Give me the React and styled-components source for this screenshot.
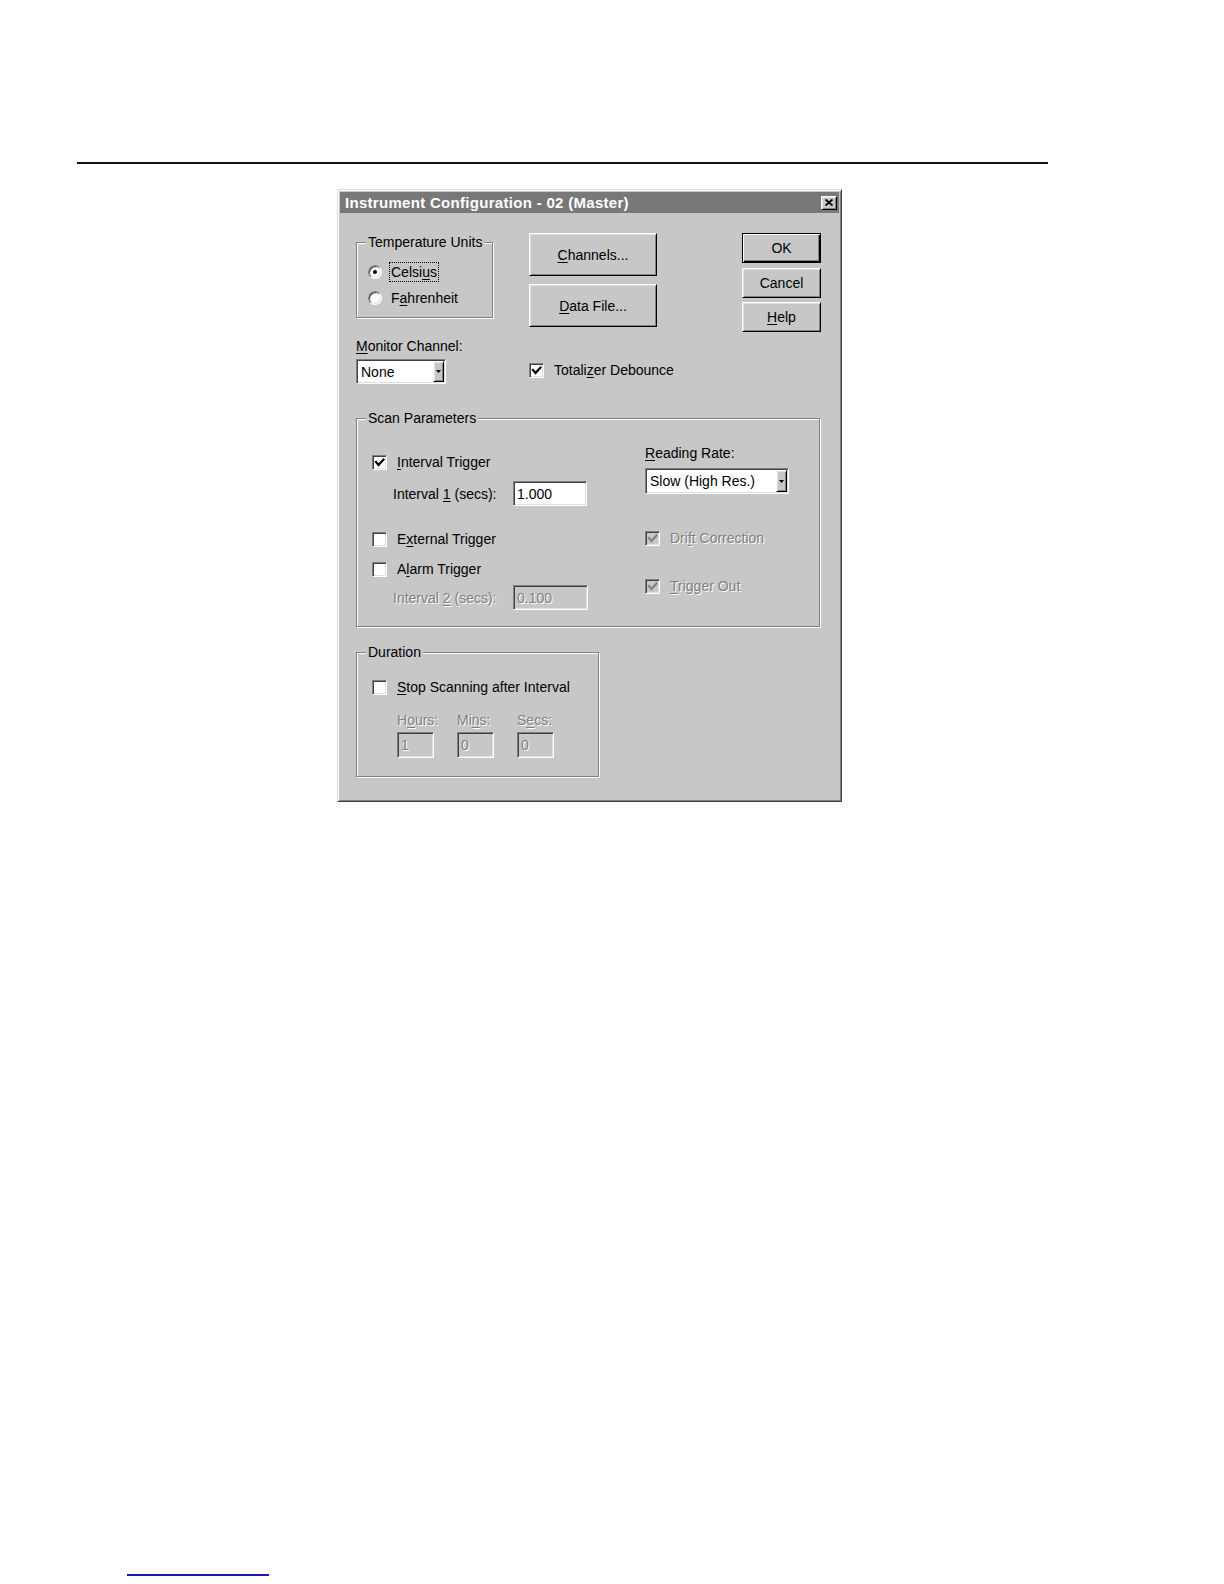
import React from 'react';
import styled, { createGlobalStyle, css } from 'styled-components';

const FACE = '#c7c7c7';

const GlobalStyle = createGlobalStyle`
  html, body { margin: 0; padding: 0; background: #fff; }
  body { font-family: "Liberation Sans", Arial, sans-serif; }
  * { box-sizing: border-box; }
`;

const raised = css`
  border: 1px solid;
  border-color: #fff #000 #000 #fff;
  box-shadow: inset 1px 1px #dfdfdf, inset -1px -1px #808080;
`;

const sunken = css`
  border: 1px solid;
  border-color: #808080 #fff #fff #808080;
  box-shadow: inset 1px 1px #404040, inset -1px -1px #dfdfdf;
`;

const disabledText = css`
  color: #808080;
  text-shadow: 1px 1px 0 #fff;
`;

const Page = styled.div`
  width: 1224px;
  height: 1584px;
  padding-top: 162px;
  display: flex;
  flex-direction: column;
  overflow: hidden;
`;

const TopRule = styled.div`
  margin-left: 77px;
  width: 971px;
  height: 2px;
  background: #111;
`;

const FootRule = styled.div`
  margin-top: auto;
  margin-bottom: 8px;
  margin-left: 127px;
  width: 142px;
  height: 2px;
  background: #1c1ca8;
`;

const Window = styled.div`
  margin-top: 25px;
  margin-left: 337px;
  width: 505px;
  background: ${FACE};
  border: 1px solid;
  border-color: #dfdfdf #404040 #404040 #dfdfdf;
  box-shadow: inset 1px 1px #fff, inset -1px -1px #808080;
  padding: 2px;
  font-size: 14px;
  color: #000;
`;

const TitleBar = styled.div`
  height: 21px;
  background: #787878;
  display: flex;
  align-items: center;
  justify-content: space-between;
  padding: 0 2px 0 5px;
`;

const TitleText = styled.span`
  color: #fff;
  font-weight: bold;
  font-size: 15px;
  letter-spacing: 0.3px;
  white-space: nowrap;
  line-height: 21px;
`;

const CloseButton = styled.div`
  width: 16px;
  height: 14px;
  background: ${FACE};
  ${raised};
  display: flex;
  align-items: center;
  justify-content: center;
`;

const Body = styled.div`
  padding: 20px 18px 22px 16px;
`;

const TopSection = styled.div`
  display: flex;
  align-items: flex-start;
`;

const LeftCol = styled.div`
  width: 137px;
  display: flex;
  flex-direction: column;
`;

const MidCol = styled.div`
  margin-left: 36px;
  width: 128px;
  display: flex;
  flex-direction: column;
`;

const RightCol = styled.div`
  margin-left: auto;
  width: 79px;
  display: flex;
  flex-direction: column;
  gap: 4.5px;
`;

const ButtonStack = styled.div`
  display: flex;
  flex-direction: column;
  gap: 8px;
`;

const PushButton = styled.div`
  width: ${p => p.$w}px;
  height: ${p => p.$h}px;
  background: ${FACE};
  font-size: 14px;
  display: flex;
  align-items: center;
  justify-content: center;
  white-space: nowrap;
  ${raised};
  ${p => p.$default && css`
    border: 1px solid #000;
    box-shadow: inset 1px 1px #fff, inset -1px -1px #000, inset -2px -2px #808080;
  `}
`;

const Key = styled.span`
  text-decoration: underline;
  text-underline-offset: 2px;
`;

const Group = styled.fieldset`
  margin: ${p => p.$mt || 0}px 0 0 0;
  padding: 0;
  min-width: 0;
  width: ${p => p.$w}px;
  border: 1px solid #808080;
  box-shadow: inset 1px 1px #fff, 1px 1px #fff;
`;

const Legend = styled.legend`
  margin-left: 9px;
  padding: 0 2px;
  line-height: 16px;
  font-size: 14px;
  background: ${FACE};
  white-space: nowrap;
`;

const RadioList = styled.div`
  display: flex;
  flex-direction: column;
  gap: 6px;
  padding: 12px 0 9px 11px;
`;

const RadioRow = styled.div`
  display: flex;
  align-items: center;
  height: 20px;
  gap: 7px;
`;

const RadioDot = styled.span`
  width: 14px;
  height: 14px;
  border-radius: 50%;
  flex: none;
  background: #fff;
  ${sunken};
  display: flex;
  align-items: center;
  justify-content: center;
  &::after {
    content: '';
    width: 4px;
    height: 4px;
    border-radius: 50%;
    background: #000;
    display: ${p => (p.$on ? 'block' : 'none')};
  }
`;

const FocusText = styled.span`
  border: 1px dotted ${p => (p.$focus ? '#000' : 'transparent')};
  padding: 1px 1px;
  line-height: 16px;
  white-space: nowrap;
`;

const Caption = styled.div`
  line-height: 16px;
  height: 16px;
  white-space: nowrap;
  margin-top: ${p => p.$mt || 0}px;
  padding-left: ${p => p.$pl || 0}px;
  width: ${p => (p.$w ? `${p.$w}px` : 'auto')};
  flex: none;
  ${p => p.$disabled && disabledText};
`;

const Combo = styled.div`
  width: ${p => p.$w}px;
  height: ${p => p.$h}px;
  margin-top: ${p => p.$mt || 0}px;
  background: #fff;
  ${sunken};
  padding: 1px;
  display: flex;
  align-items: stretch;
`;

const ComboText = styled.span`
  flex: 1;
  padding-left: 3px;
  display: flex;
  align-items: center;
  white-space: nowrap;
`;

const DropButton = styled.span`
  width: 11px;
  background: ${FACE};
  ${raised};
  display: flex;
  align-items: center;
  justify-content: center;
`;

const CheckRow = styled.div`
  display: flex;
  align-items: center;
  height: 16px;
  gap: 10px;
  margin-top: ${p => p.$mt || 0}px;
  white-space: nowrap;
`;

const CheckBox = styled.span`
  width: 15px;
  height: 15px;
  flex: none;
  background: ${p => (p.$disabled ? FACE : '#fff')};
  ${sunken};
  display: flex;
  align-items: center;
  justify-content: center;
`;

const CheckLabel = styled.span`
  line-height: 16px;
  ${p => p.$disabled && disabledText};
`;

const FieldRow = styled.div`
  display: flex;
  align-items: center;
  margin-top: ${p => p.$mt || 0}px;
`;

const TextField = styled.div`
  width: ${p => p.$w}px;
  height: ${p => p.$h}px;
  background: ${p => (p.$disabled ? FACE : '#fff')};
  ${sunken};
  padding-left: 3px;
  display: flex;
  align-items: center;
  white-space: nowrap;
  ${p => p.$disabled && disabledText};
`;

const ScanGrid = styled.div`
  display: grid;
  grid-template-columns: 273px 1fr;
  padding: 0 0 16px 15px;
`;

const Column = styled.div`
  display: flex;
  flex-direction: column;
`;

const DurationBody = styled.div`
  padding: 0 0 18px 15px;
  display: flex;
  flex-direction: column;
`;

const TimeGrid = styled.div`
  display: grid;
  grid-template-columns: repeat(3, 60px);
  margin: 17px 0 0 25px;
`;

const TimeCol = styled.div`
  display: flex;
  flex-direction: column;
  gap: 4px;
`;

const CheckMark = ({ color }) => (
  <svg width="11" height="11" viewBox="0 0 11 11">
    <polyline points="2,5 4.5,8 9.5,2.5" fill="none" stroke={color} strokeWidth="2.2" strokeLinecap="square" />
  </svg>
);

const Check = ({ checked, disabled, mt, children }) => (
  <CheckRow $mt={mt}>
    <CheckBox $disabled={disabled}>{checked && <CheckMark color={disabled ? '#808080' : '#000'} />}</CheckBox>
    <CheckLabel $disabled={disabled}>{children}</CheckLabel>
  </CheckRow>
);

const Arrow = () => (
  <svg width="5" height="3" viewBox="0 0 5 3">
    <polygon points="0,0 5,0 2.5,3" fill="#000" />
  </svg>
);

const Dropdown = ({ w, h, mt, value }) => (
  <Combo $w={w} $h={h} $mt={mt}>
    <ComboText>{value}</ComboText>
    <DropButton>
      <Arrow />
    </DropButton>
  </Combo>
);

export default function App() {
  return (
    <>
      <GlobalStyle />
      <Page>
        <TopRule />
        <Window>
          <TitleBar>
            <TitleText>Instrument Configuration - 02 (Master)</TitleText>
            <CloseButton>
              <svg width="8" height="7" viewBox="0 0 8 7">
                <path d="M0.5 0.5 L7.5 6.5 M7.5 0.5 L0.5 6.5" stroke="#000" strokeWidth="1.8" />
              </svg>
            </CloseButton>
          </TitleBar>
          <Body>
            <TopSection>
              <LeftCol>
                <Group $w={137} $mt={1}>
                  <Legend>Temperature Units</Legend>
                  <RadioList>
                    <RadioRow>
                      <RadioDot $on />
                      <FocusText $focus>
                        Celsi<Key>u</Key>s
                      </FocusText>
                    </RadioRow>
                    <RadioRow>
                      <RadioDot />
                      <FocusText>
                        F<Key>a</Key>hrenheit
                      </FocusText>
                    </RadioRow>
                  </RadioList>
                </Group>
                <Caption $mt={20}>
                  <Key>M</Key>onitor Channel:
                </Caption>
                <Dropdown w={90} h={25} mt={5} value="None" />
              </LeftCol>
              <MidCol>
                <ButtonStack>
                  <PushButton $w={128} $h={43}>
                    <Key>C</Key>hannels...
                  </PushButton>
                  <PushButton $w={128} $h={43}>
                    <Key>D</Key>ata File...
                  </PushButton>
                </ButtonStack>
                <Check checked mt={35}>
                  Totali<Key>z</Key>er Debounce
                </Check>
              </MidCol>
              <RightCol>
                <PushButton $w={79} $h={30} $default>
                  OK
                </PushButton>
                <PushButton $w={79} $h={30}>
                  Cancel
                </PushButton>
                <PushButton $w={79} $h={30}>
                  <Key>H</Key>elp
                </PushButton>
              </RightCol>
            </TopSection>

            <Group $w={464} $mt={26}>
              <Legend>Scan Parameters</Legend>
              <ScanGrid>
                <Column>
                  <Check checked mt={28}>
                    <Key>I</Key>nterval Trigger
                  </Check>
                  <FieldRow $mt={11}>
                    <Caption $pl={21} $w={141}>
                      Interval <Key>1</Key> (secs):
                    </Caption>
                    <TextField $w={74} $h={25}>1.000</TextField>
                  </FieldRow>
                  <Check mt={25}>
                    E<Key>x</Key>ternal Trigger
                  </Check>
                  <Check mt={14}>
                    A<Key>l</Key>arm Trigger
                  </Check>
                  <FieldRow $mt={8}>
                    <Caption $pl={21} $w={141} $disabled>
                      Interval <Key>2</Key> (secs):
                    </Caption>
                    <TextField $w={75} $h={25} $disabled>
                      0.100
                    </TextField>
                  </FieldRow>
                </Column>
                <Column>
                  <Caption $mt={19}>
                    <Key>R</Key>eading Rate:
                  </Caption>
                  <Dropdown w={144} h={26} mt={7} value="Slow (High Res.)" />
                  <Check checked disabled mt={36}>
                    Dri<Key>f</Key>t Correction
                  </Check>
                  <Check checked disabled mt={32}>
                    <Key>T</Key>rigger Out
                  </Check>
                </Column>
              </ScanGrid>
            </Group>

            <Group $w={243} $mt={17}>
              <Legend>Duration</Legend>
              <DurationBody>
                <Check mt={19}>
                  <Key>S</Key>top Scanning after Interval
                </Check>
                <TimeGrid>
                  <TimeCol>
                    <Caption $disabled>
                      H<Key>o</Key>urs:
                    </Caption>
                    <TextField $w={37} $h={26} $disabled>
                      1
                    </TextField>
                  </TimeCol>
                  <TimeCol>
                    <Caption $disabled>
                      Mi<Key>n</Key>s:
                    </Caption>
                    <TextField $w={37} $h={26} $disabled>
                      0
                    </TextField>
                  </TimeCol>
                  <TimeCol>
                    <Caption $disabled>
                      S<Key>e</Key>cs:
                    </Caption>
                    <TextField $w={37} $h={26} $disabled>
                      0
                    </TextField>
                  </TimeCol>
                </TimeGrid>
              </DurationBody>
            </Group>
          </Body>
        </Window>
        <FootRule />
      </Page>
    </>
  );
}
